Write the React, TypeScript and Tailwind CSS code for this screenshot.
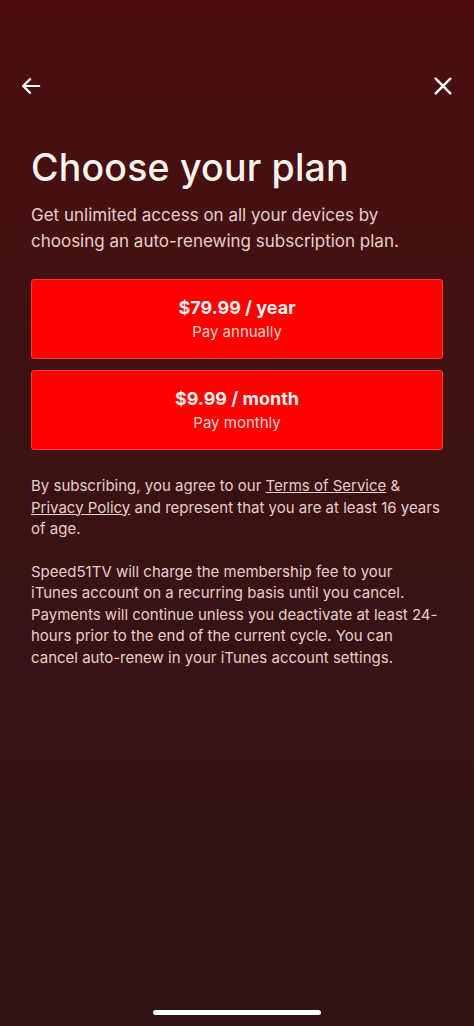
import React from 'react';

const plans = [
  { price: '$79.99 / year', label: 'Pay annually' },
  { price: '$9.99 / month', label: 'Pay monthly' },
];

export default function App() {
  return (
    <div
      className="w-[474px] h-[1026px] flex flex-col bg-gradient-to-b from-[#4c0e0f] via-[#3a1214] to-[#301315] text-white overflow-hidden"
      style={{ fontFamily: 'Inter, "Noto Sans", sans-serif' }}
    >
      {/* Barre du haut */}
      <div className="flex items-center justify-between px-[20px] pt-[75px]">
        <svg width="22" height="22" viewBox="0 0 24 24" fill="none" stroke="white" strokeWidth="2.4" strokeLinecap="round" strokeLinejoin="round">
          <path d="M21 12H3.5" />
          <path d="M11 4.5 3.5 12l7.5 7.5" />
        </svg>
        <svg width="22" height="22" viewBox="0 0 24 24" fill="none" stroke="white" strokeWidth="2.6" strokeLinecap="round">
          <path d="M4 4l16 16" />
          <path d="M20 4 4 20" />
        </svg>
      </div>

      <div className="px-[31px] pt-[48px]">
        <h1 className="text-[37.5px] leading-[46px] font-medium tracking-[0.2px] text-[#fbf3ef]">Choose your plan</h1>
        <p className="mt-[11px] text-[17px] leading-[26px] text-[#e9cfca]">
          Get unlimited access on all your devices by
          <br />
          choosing an auto-renewing subscription plan.
        </p>

        {/* Plans */}
        <div className="mt-[25px] flex flex-col gap-[11px]">
          {plans.map((plan) => (
            <button
              key={plan.price}
              className="h-[80px] w-full rounded-[3px] bg-[#ff0000] border border-[#ff3a2e] flex flex-col items-center justify-center"
            >
              <span className="text-[18px] leading-[22px] font-bold text-[#fff1ee]">{plan.price}</span>
              <span className="mt-[3px] text-[15px] leading-[20px] text-[#ffd3cc]">{plan.label}</span>
            </button>
          ))}
        </div>

        {/* Mentions */}
        <p className="mt-[25px] text-[15px] leading-[21.5px] text-[#e6cfcb]">
          By subscribing, you agree to our <span className="underline underline-offset-1">Terms of Service</span> &amp;{' '}
          <span className="underline underline-offset-1">Privacy Policy</span> and represent that you are at least 16 years of age.
        </p>
        <p className="mt-[21px] text-[15px] leading-[21.5px] text-[#e6cfcb]">
          Speed51TV will charge the membership fee to your iTunes account on a recurring basis until you cancel. Payments will continue unless you deactivate at least 24-hours prior to the end of the current cycle. You can cancel auto-renew in your iTunes account settings.
        </p>
      </div>

      <div className="mt-auto mb-[11px] flex justify-center">
        <div className="w-[168px] h-[5px] rounded-full bg-white" />
      </div>
    </div>
  );
}
